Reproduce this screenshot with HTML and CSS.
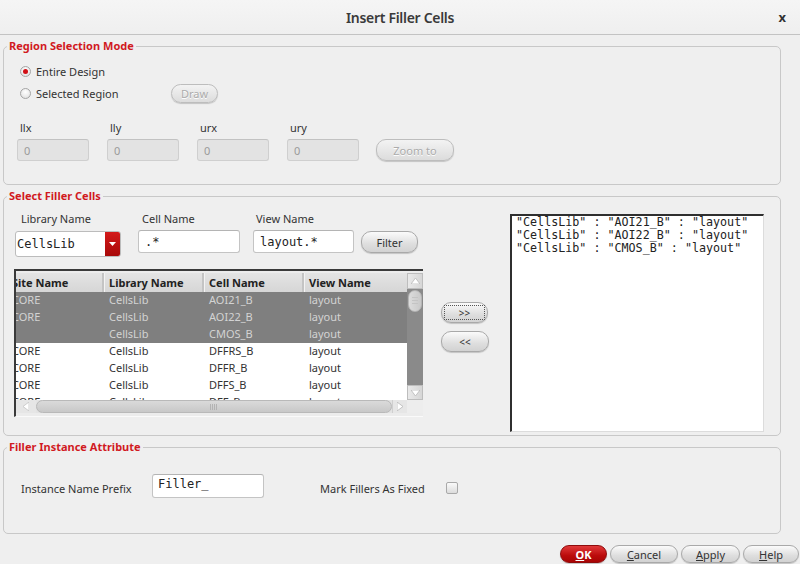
FILE: index.html
```html
<!DOCTYPE html>
<html>
<head>
<meta charset="utf-8">
<title>Insert Filler Cells</title>
<link rel="stylesheet" href="styles.css">
</head>
<body>
<div class="window">
  <header class="titlebar">
    <span class="title">Insert Filler Cells</span>
    <span class="close">x</span>
  </header>
  <main class="content">
    <fieldset class="group">
      <legend>Region Selection Mode</legend>
      <div class="region-body">
        <div class="radio-row"><span class="radio checked"></span><span class="radio-label">Entire Design</span></div>
        <div class="radio-row"><span class="radio"></span><span class="radio-label">Selected Region</span><button class="pill disabled draw">Draw</button></div>
        <div class="coords">
          <div class="coord"><span class="coord-label">llx</span><div class="field disabled">0</div></div>
          <div class="coord"><span class="coord-label">lly</span><div class="field disabled">0</div></div>
          <div class="coord"><span class="coord-label">urx</span><div class="field disabled">0</div></div>
          <div class="coord"><span class="coord-label">ury</span><div class="field disabled">0</div></div>
          <button class="pill disabled zoom">Zoom to</button>
        </div>
      </div>
    </fieldset>

    <fieldset class="group group-cells">
      <legend>Select Filler Cells</legend>
      <div class="cells-body">
        <div class="left-col">
          <div class="filter-row">
            <div class="fcol lib">
              <span class="flabel">Library Name</span>
              <div class="combo"><span class="combo-text mono">CellsLib</span><span class="combo-btn"><svg width="7" height="4" viewBox="0 0 7 4"><polygon points="0,0 7,0 3.5,4" fill="#fff"/></svg></span></div>
            </div>
            <div class="fcol cell">
              <span class="flabel">Cell Name</span>
              <div class="field input mono">.*</div>
            </div>
            <div class="fcol view">
              <span class="flabel">View Name</span>
              <div class="field input mono">layout.*</div>
            </div>
            <button class="pill filter">Filter</button>
          </div>

          <div class="table">
            <div class="table-main">
              <div class="viewport">
                <div class="grid">
                  <div class="row hdr"><span class="c1">Site Name</span><span class="c2">Library Name</span><span class="c3">Cell Name</span><span class="c4">View Name</span></div>
                  <div class="row sel"><span class="c1">CORE</span><span class="c2">CellsLib</span><span class="c3">AOI21_B</span><span class="c4">layout</span></div>
                  <div class="row sel"><span class="c1">CORE</span><span class="c2">CellsLib</span><span class="c3">AOI22_B</span><span class="c4">layout</span></div>
                  <div class="row sel"><span class="c1"></span><span class="c2">CellsLib</span><span class="c3">CMOS_B</span><span class="c4">layout</span></div>
                  <div class="row"><span class="c1">CORE</span><span class="c2">CellsLib</span><span class="c3">DFFRS_B</span><span class="c4">layout</span></div>
                  <div class="row"><span class="c1">CORE</span><span class="c2">CellsLib</span><span class="c3">DFFR_B</span><span class="c4">layout</span></div>
                  <div class="row"><span class="c1">CORE</span><span class="c2">CellsLib</span><span class="c3">DFFS_B</span><span class="c4">layout</span></div>
                  <div class="row"><span class="c1">CORE</span><span class="c2">CellsLib</span><span class="c3">DFF_B</span><span class="c4">layout</span></div>
                </div>
              </div>
              <div class="vscroll">
                <div class="sarrow vup"><svg width="9" height="6" viewBox="0 0 9 6"><polygon points="0,6 9,6 4.5,0" fill="#fff" stroke="#b8b8b8" stroke-width="0.8"/></svg></div>
                <div class="vtrack"><div class="vthumb"></div></div>
                <div class="sarrow vdown"><svg width="9" height="6" viewBox="0 0 9 6"><polygon points="0,0 9,0 4.5,6" fill="#fff" stroke="#b8b8b8" stroke-width="0.8"/></svg></div>
              </div>
            </div>
            <div class="table-foot">
              <div class="hscroll">
                <div class="harrow hleft"><svg width="6" height="9" viewBox="0 0 6 9"><polygon points="6,0 6,9 0,4.5" fill="#fff" stroke="#c4c4c4" stroke-width="0.8"/></svg></div>
                <div class="hthumb"><span class="hgrip"></span></div>
                <div class="harrow hright"><svg width="6" height="9" viewBox="0 0 6 9"><polygon points="0,0 0,9 6,4.5" fill="#fff" stroke="#b8b8b8" stroke-width="0.8"/></svg></div>
              </div>
              <div class="corner"></div>
            </div>
          </div>
        </div>

        <div class="mid-col">
          <button class="pill move focus"><span class="focus-ring">&gt;&gt;</span></button>
          <button class="pill move back">&lt;&lt;</button>
        </div>

        <div class="selected-list mono">
          <div class="entry">"CellsLib" : "AOI21_B" : "layout"</div>
          <div class="entry">"CellsLib" : "AOI22_B" : "layout"</div>
          <div class="entry">"CellsLib" : "CMOS_B" : "layout"</div>
        </div>
      </div>
    </fieldset>

    <fieldset class="group group-attr">
      <legend>Filler Instance Attribute</legend>
      <div class="attr-body">
        <span class="prefix-label">Instance Name Prefix</span>
        <div class="field input prefix mono">Filler_</div>
        <span class="fixed-label">Mark Fillers As Fixed</span>
        <span class="checkbox"></span>
      </div>
    </fieldset>

    <div class="actions">
      <button class="pill act ok"><u>O</u>K</button>
      <button class="pill act"><u>C</u>ancel</button>
      <button class="pill act"><u>A</u>pply</button>
      <button class="pill act"><u>H</u>elp</button>
    </div>
  </main>
</div>
</body>
</html>
```

FILE: styles.css
```css
* { box-sizing: border-box; }

html, body {
  margin: 0;
  padding: 0;
}

body {
  width: 800px;
  height: 564px;
  overflow: hidden;
  background: #efefef;
  font-family: "Noto Sans", "Open Sans", sans-serif;
  font-size: 11px;
  color: #333;
}

.mono {
  font-family: "DejaVu Sans Mono", "Liberation Mono", monospace;
}

/* Title bar */
.titlebar {
  height: 35px;
  display: grid;
  grid-template-columns: 1fr auto 1fr;
  align-items: center;
  background: linear-gradient(#f5f5f5, #efefef);
  border-bottom: 1px solid #c3c3c3;
}
.title {
  grid-column: 2;
  font-size: 14px;
  font-weight: 600;
  color: #3a3a3a;
  letter-spacing: -0.3px;
}
.close {
  grid-column: 3;
  justify-self: end;
  margin-right: 14px;
  font-size: 13px;
  font-weight: 700;
  color: #333;
}

.content {
  padding: 4px 19px 0 3px;
}

/* Group frames */
.group {
  margin: 0;
  padding: 0;
  min-width: 0;
  border: 1px solid #c8c8c8;
  border-radius: 5px;
}
.group legend {
  margin-left: 3px;
  padding: 0 2px;
  font-size: 11px;
  line-height: 14px;
  font-weight: 700;
  color: #d11a1f;
}
.group + .group {
  margin-top: 4px;
}

/* Region selection */
.region-body {
  padding: 7px 0 23px 0;
}
.radio-row {
  height: 22px;
  display: flex;
  align-items: center;
  padding-left: 16px;
}
.radio {
  width: 11px;
  height: 11px;
  border-radius: 50%;
  border: 1px solid #a5a5a5;
  background: radial-gradient(circle at 50% 35%, #ffffff, #dcdcdc);
  display: flex;
  align-items: center;
  justify-content: center;
}
.radio.checked::after {
  content: "";
  width: 5px;
  height: 5px;
  border-radius: 50%;
  background: #d20f16;
}
.radio-label {
  margin-left: 5px;
  width: 135px;
}
.coords {
  margin-top: 17px;
  padding-left: 13px;
  display: flex;
  align-items: flex-end;
  gap: 18px;
}
.coord {
  display: flex;
  flex-direction: column;
  width: 72px;
}
.coord-label {
  height: 14px;
  line-height: 14px;
  padding-left: 3px;
  margin-bottom: 4px;
}

.field {
  height: 22px;
  border: 1px solid #c4c4c4;
  border-top-color: #b4b4b4;
  border-radius: 3px;
  display: flex;
  align-items: center;
  padding-left: 6px;
}
.field.disabled {
  background: #e3e3e3;
  color: #9a9a9a;
  border-color: #cfcfcf;
  border-top-color: #c2c2c2;
}
.field.input {
  background: #fff;
  font-size: 12px;
  color: #222;
}

/* Buttons */
.pill {
  font-family: "Noto Sans", "Open Sans", sans-serif;
  font-size: 11px;
  color: #333;
  border: 1px solid #a9a9a9;
  border-radius: 10px;
  background: linear-gradient(#fbfbfb, #dedede 60%, #d2d2d2);
  box-shadow: 0 1px 1px rgba(0, 0, 0, 0.18);
  padding: 0;
  display: flex;
  align-items: center;
  justify-content: center;
}
.pill.disabled {
  color: #ababab;
  text-shadow: 0 1px 0 #fff;
  border-color: #bdbdbd;
  background: linear-gradient(#f3f3f3, #dcdcdc);
}
.draw {
  width: 47px;
  height: 19px;
}
.zoom {
  width: 78px;
  height: 22px;
  margin-left: -1px;
}

/* Select filler cells */
.cells-body {
  display: flex;
  align-items: flex-start;
  padding: 9px 16px 3px 10px;
}
.left-col {
  width: 409px;
  flex: none;
}
.filter-row {
  display: flex;
  align-items: flex-start;
}
.fcol {
  display: flex;
  flex-direction: column;
}
.flabel {
  height: 14px;
  line-height: 14px;
  margin-bottom: 4px;
}
.fcol.lib { margin-left: 1px; width: 106px; }
.fcol.lib .flabel { padding-left: 6px; }
.fcol.cell { margin-left: 17px; width: 102px; }
.fcol.cell .flabel { padding-left: 4px; }
.fcol.view { margin-left: 13px; width: 101px; }
.fcol.view .flabel { padding-left: 3px; }
.fcol .field.input { height: 23px; }

.combo {
  margin-top: 1px;
  height: 26px;
  display: flex;
  border: 1px solid #bcbcbc;
  border-radius: 3px;
  background: #fff;
  overflow: hidden;
}
.combo-text {
  flex: 1;
  display: flex;
  align-items: center;
  padding-left: 1px;
  font-size: 12px;
  color: #222;
}
.combo-btn {
  width: 15px;
  background: linear-gradient(#d31a1a, #a80909);
  display: flex;
  align-items: center;
  justify-content: center;
}
.filter {
  margin-left: 7px;
  margin-top: 19px;
  width: 57px;
  height: 22px;
}

/* Table */
.table {
  margin-top: 12px;
  height: 148px;
  background: #ececec;
  border-top: 2px solid #3a3a3a;
  border-left: 2px solid #3a3a3a;
  border-bottom: 1px solid #fafafa;
  padding-top: 2px;
  padding-bottom: 3px;
  display: flex;
  flex-direction: column;
}
.table-main {
  display: flex;
  height: 127px;
}
.viewport {
  flex: 1;
  overflow: hidden;
  background: #fff;
}
.grid {
  margin-left: -8px;
  width: 420px;
}
.row {
  display: flex;
  height: 17px;
  line-height: 16px;
  white-space: nowrap;
}
.row span {
  flex: none;
  padding-left: 4px;
  overflow: hidden;
}
.c1 { width: 97px; }
.c2 { width: 100px; }
.c3 { width: 100px; }
.c4 { width: 123px; }
.row.hdr {
  height: 19px;
  line-height: 19px;
  font-weight: 700;
  color: #222;
  background: linear-gradient(#e4e4e4, #d6d6d6);
}
.row.hdr span {
  border-right: 1px solid #f3f3f3;
  box-shadow: inset -2px 0 0 #c4c4c4;
}
.row.sel {
  background: #7f7f7f;
  color: #d3d3d3;
}

.vscroll {
  width: 16px;
  flex: none;
  display: flex;
  flex-direction: column;
  background: #8a8a8a;
}
.sarrow {
  height: 16px;
  background: linear-gradient(90deg, #e9e9e9, #d6d6d6);
  border: 1px solid #bdbdbd;
  display: flex;
  align-items: center;
  justify-content: center;
}
.vdown { height: 15px; }
.vtrack {
  flex: 1;
  background: #8a8a8a;
  padding: 1px 1px;
}
.vthumb {
  height: 22px;
  border-radius: 7px;
  background:
    repeating-linear-gradient(#c4c4c4 0 1px, transparent 1px 3px) center / 6px 9px no-repeat,
    linear-gradient(90deg, #dcdcdc, #c9c9c9);
  border: 1px solid #b5b5b5;
}

.table-foot {
  display: flex;
  height: 13px;
}
.hscroll {
  flex: 1;
  display: flex;
  background: #e3e3e3;
}
.harrow {
  display: flex;
  align-items: center;
  justify-content: center;
  background: #e6e6e6;
}
.hleft { width: 20px; }
.hright { width: 15px; border-left: 1px solid #cfcfcf; }
.hthumb {
  flex: 1;
  border-radius: 7px;
  border: 1px solid #b9b9b9;
  background: linear-gradient(#dadada, #c8c8c8);
  display: flex;
  align-items: center;
  justify-content: center;
}
.hgrip {
  width: 8px;
  height: 6px;
  background: repeating-linear-gradient(90deg, #b3b3b3 0 1px, transparent 1px 2px);
}
.corner {
  width: 16px;
  background: #ededed;
}

.mid-col {
  width: 47px;
  flex: none;
  margin-left: 18px;
  padding-top: 90px;
  display: flex;
  flex-direction: column;
}
.move {
  width: 47px;
  height: 21px;
  font-size: 10px;
}
.move.back {
  margin-top: 8px;
  width: 48px;
}
.focus-ring {
  width: 41px;
  height: 15px;
  border: 1px dotted #555;
  display: flex;
  align-items: center;
  justify-content: center;
}

.selected-list {
  margin-left: 22px;
  margin-top: 2px;
  width: 254px;
  height: 218px;
  flex: none;
  background: #fff;
  border-top: 2px solid #2f2f2f;
  border-left: 2px solid #2f2f2f;
  border-right: 1px solid #dcdcdc;
  border-bottom: 1px solid #dcdcdc;
  padding-left: 4px;
  font-size: 11.7px;
  line-height: 13px;
  color: #222;
}
.entry {
  white-space: nowrap;
}

/* Attributes */
.attr-body {
  display: flex;
  align-items: center;
  padding: 20px 0 35px 17px;
}
.prefix-label { width: 131px; margin-top: 4px; }
.field.prefix {
  width: 112px;
  height: 24px;
  align-items: flex-start;
  padding-top: 2px;
  padding-left: 5px;
}
.fixed-label {
  margin-left: 56px;
  width: 126px;
  margin-top: 4px;
}
.checkbox {
  width: 12px;
  height: 12px;
  margin-top: 4px;
  border: 1px solid #a9a9a9;
  border-radius: 2px;
  background: linear-gradient(#fafafa, #dcdcdc);
}

/* Action buttons */
.actions {
  margin-top: 11px;
  margin-right: -18px;
  display: flex;
  justify-content: flex-end;
  gap: 3px;
}
.act {
  height: 18px;
  font-size: 11px;
}
.act u { text-underline-offset: 1px; }
.act:nth-child(1) { width: 47px; }
.act:nth-child(2) { width: 68px; }
.act:nth-child(3) { width: 59px; }
.act:nth-child(4) { width: 56px; }
.ok {
  color: #fff;
  font-weight: 700;
  border-color: #8e0c0c;
  background: linear-gradient(#e0393a, #bb0b0b 60%, #a80505);
}
```
